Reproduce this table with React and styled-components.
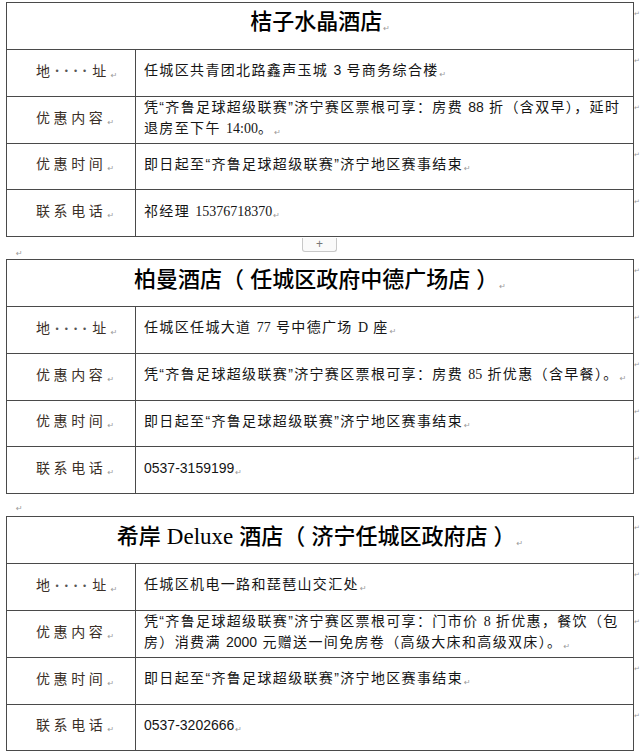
import React from 'react';
import styled, { createGlobalStyle } from 'styled-components';

const GlobalStyle = createGlobalStyle`
  html, body {
    margin: 0;
    padding: 0;
    background: #ffffff;
  }
  body {
    font-family: "Liberation Sans", "Noto Sans CJK SC", sans-serif;
    color: #111;
  }
`;

const Page = styled.div`
  width: 640px;
  height: 754px;
  overflow: hidden;
  padding: 2px 0 0 6px;
  box-sizing: border-box;
`;

const TableRow = styled.div`
  display: flex;
  align-items: stretch;
`;

const Table = styled.table`
  width: 628px;
  border-collapse: collapse;
  table-layout: fixed;
`;

const LabelCol = styled.col`
  width: 129px;
`;

const Cell = styled.td`
  border: 1px solid #4a4a4a;
  height: 45.8px;
  padding: 0 0 0 8px;
  vertical-align: middle;
  font-size: 14px;
  line-height: 21px;
  letter-spacing: 1.35px;
  color: #151515;
  white-space: nowrap;
  overflow: hidden;
`;

const TitleCell = styled.td`
  border: 1px solid #4a4a4a;
  height: 45.8px;
  padding: 0;
  text-align: center;
  vertical-align: middle;
  font-size: 22px;
  line-height: 24px;
  font-weight: 500;
  color: #000;
  white-space: nowrap;
`;

const LabelCell = styled.td`
  border: 1px solid #4a4a4a;
  padding: 0 0 0 29px;
  vertical-align: middle;
  font-family: "Noto Sans CJK SC", sans-serif;
  font-size: 14px;
  line-height: 21px;
  letter-spacing: 3.6px;
  color: #3b3028;
  white-space: nowrap;
`;

const Dots = styled.span`
  font-family: "Liberation Sans", sans-serif;
  letter-spacing: 6px;
  font-size: 9px;
  vertical-align: middle;
  color: #555;
  margin-left: 2px;
`;

const Num = styled.span`
  font-family: ${(p) =>
    p.$serif
      ? '"Liberation Serif", "Noto Sans CJK SC", serif'
      : '"Liberation Sans", "Noto Sans CJK SC", sans-serif'};
  font-size: ${(p) => p.$size || 14}px;
  letter-spacing: 0;
`;

const Mark = styled.span`
  font-family: "DejaVu Sans", sans-serif;
  font-size: 8px;
  color: #9a9a9a;
  letter-spacing: 0;
  margin-left: 1px;
  vertical-align: -2px;
`;

const EdgeCol = styled.div`
  display: flex;
  flex-direction: column;
  width: 6px;
`;

const EdgeMark = styled.div`
  height: ${(p) => p.$h}px;
  font-family: "DejaVu Sans", sans-serif;
  font-size: 7px;
  color: #9a9a9a;
  padding: 8px 0 0 0;
  box-sizing: border-box;
`;

const Gap = styled.div`
  height: ${(p) => p.$h}px;
  display: flex;
  align-items: center;
  padding: 0 0 0 10px;
  position: relative;
`;

const GapMark = styled.span`
  font-family: "DejaVu Sans", sans-serif;
  font-size: 8px;
  color: #9a9a9a;
  margin-top: ${(p) => p.$mt || 0}px;
`;

const AddButton = styled.div`
  position: absolute;
  left: 296px;
  top: 1px;
  width: 33px;
  height: 13px;
  border: 1px solid #c8c8c8;
  border-top: none;
  border-radius: 0 0 3px 3px;
  background: #fafafa;
  color: #777;
  font-size: 12px;
  line-height: 12px;
  text-align: center;
`;

const hotels = [
  {
    title: '桔子水晶酒店',
    address: (
      <>
        任城区共青团北路鑫声玉城 <Num>3</Num> 号商务综合楼
      </>
    ),
    offer: (
      <>
        凭“齐鲁足球超级联赛”济宁赛区票根可享：房费 <Num>88</Num> 折（含双早），延时
        <br />
        退房至下午 <Num $serif>14:00</Num>。
      </>
    ),
    phone: (
      <>
        祁经理 <Num $serif>15376718370</Num>
      </>
    ),
  },
  {
    title: '柏曼酒店（ 任城区政府中德广场店 ）',
    address: (
      <>
        任城区任城大道 <Num $serif>77</Num> 号中德广场 <Num $serif>D</Num> 座
      </>
    ),
    offer: (
      <>
        凭“齐鲁足球超级联赛”济宁赛区票根可享：房费 <Num $serif>85</Num> 折优惠（含早餐）。
      </>
    ),
    phone: <Num>0537-3159199</Num>,
  },
  {
    title: (
      <>
        希岸 <Num $serif $size={23}>Deluxe</Num> 酒店（ 济宁任城区政府店 ）
      </>
    ),
    address: <>任城区机电一路和琵琶山交汇处</>,
    offer: (
      <>
        凭“齐鲁足球超级联赛”济宁赛区票根可享：门市价 <Num $serif>8</Num> 折优惠，餐饮（包
        <br />
        房）消费满 <Num>2000</Num> 元赠送一间免房卷（高级大床和高级双床）。
      </>
    ),
    phone: <Num>0537-3202666</Num>,
  },
];

const HotelTable = ({ hotel }) => (
  <TableRow>
    <Table>
      <colgroup>
        <LabelCol />
        <col />
      </colgroup>
      <tbody>
        <tr>
          <TitleCell colSpan={2}>
            {hotel.title}
            <Mark>↵</Mark>
          </TitleCell>
        </tr>
        <tr>
          <LabelCell>
            地<Dots>••••</Dots>址<Mark>↵</Mark>
          </LabelCell>
          <Cell>
            {hotel.address}
            <Mark>↵</Mark>
          </Cell>
        </tr>
        <tr>
          <LabelCell>
            优惠内容<Mark>↵</Mark>
          </LabelCell>
          <Cell>
            {hotel.offer}
            <Mark>↵</Mark>
          </Cell>
        </tr>
        <tr>
          <LabelCell>
            优惠时间<Mark>↵</Mark>
          </LabelCell>
          <Cell>
            即日起至“齐鲁足球超级联赛”济宁地区赛事结束<Mark>↵</Mark>
          </Cell>
        </tr>
        <tr>
          <LabelCell>
            联系电话<Mark>↵</Mark>
          </LabelCell>
          <Cell>
            {hotel.phone}
            <Mark>↵</Mark>
          </Cell>
        </tr>
      </tbody>
    </Table>
    <EdgeCol>
      {[47, 47, 47, 47, 47].map((h, i) => (
        <EdgeMark key={i} $h={h}>
          ↵
        </EdgeMark>
      ))}
    </EdgeCol>
  </TableRow>
);

export default function App() {
  return (
    <Page>
      <GlobalStyle />
      <HotelTable hotel={hotels[0]} />
      <Gap $h={22}>
        <GapMark $mt={10}>↵</GapMark>
        <AddButton>+</AddButton>
      </Gap>
      <HotelTable hotel={hotels[1]} />
      <Gap $h={22}>
        <GapMark $mt={6}>↵</GapMark>
      </Gap>
      <HotelTable hotel={hotels[2]} />
    </Page>
  );
}
